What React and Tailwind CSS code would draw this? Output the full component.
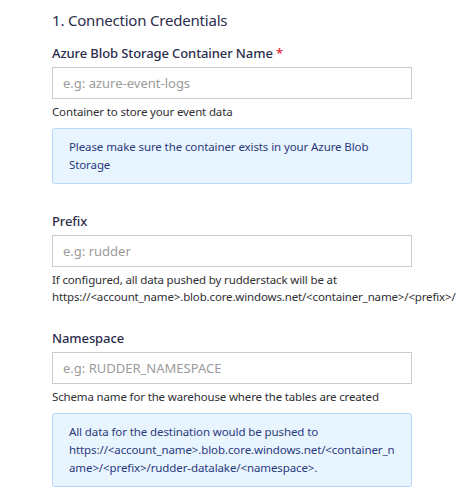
import React from "react";

const Field = ({ label, required, placeholder, help, className = "" }) => (
    <div className={className}>
        <label className="block text-[13px] leading-[20px] tracking-[-0.1px] font-medium text-[#2b2d4b]">
            {label}
            {required && <span className="text-[#e8242f]"> *</span>}
        </label>
        <input
            type="text"
            placeholder={placeholder}
            className="mt-[4px] block w-[360px] h-[32px] border border-[#c9ccd3] bg-white pl-[10px] text-[13px] text-[#333] placeholder:text-[#9b9b9b] outline-none"
        />
        {help && (
            <p className="mt-[4px] text-[11.5px] leading-[17px] tracking-[-0.15px] text-[#2f2f33]">{help}</p>
        )}
    </div>
);

const InfoBox = ({ children }) => (
    <div className="mt-[8px] w-[360px] rounded-[3px] border border-[#b5d7fb] bg-[#e8f4fe] px-[16px] py-[9px] text-[11.5px] leading-[18px] tracking-[-0.1px] text-[#283a7d] break-words">
        {children}
    </div>
);

export default function App() {
    return (
        <div
            className="min-h-screen bg-white pl-[52px] pt-[8px]"
            style={{ fontFamily: '"Noto Sans", "Open Sans", sans-serif' }}
        >
            <h2 className="text-[15px] leading-[24px] tracking-[-0.2px] text-[#2b2d4b]">1. Connection Credentials</h2>

            {/* Container name */}
            <Field
                className="mt-[11px]"
                label="Azure Blob Storage Container Name"
                required
                placeholder="e.g: azure-event-logs"
                help="Container to store your event data"
            />
            <InfoBox>Please make sure the container exists in your Azure Blob Storage</InfoBox>

            {/* Prefix */}
            <Field
                className="mt-[27px]"
                label="Prefix"
                placeholder="e.g: rudder"
                help={
                    <>
                        If configured, all data pushed by rudderstack will be at
                        https://&lt;account_name&gt;.blob.core.windows.net/&lt;container_name&gt;/&lt;prefix&gt;/
                    </>
                }
            />

            {/* Namespace */}
            <Field
                className="mt-[23px]"
                label="Namespace"
                placeholder="e.g: RUDDER_NAMESPACE"
                help="Schema name for the warehouse where the tables are created"
            />
            <InfoBox>
                All data for the destination would be pushed to
                https://&lt;account_name&gt;.blob.core.windows.net/&lt;container_name&gt;/&lt;prefix&gt;/rudder-datalake/&lt;namespace&gt;.
            </InfoBox>
        </div>
    );
}
